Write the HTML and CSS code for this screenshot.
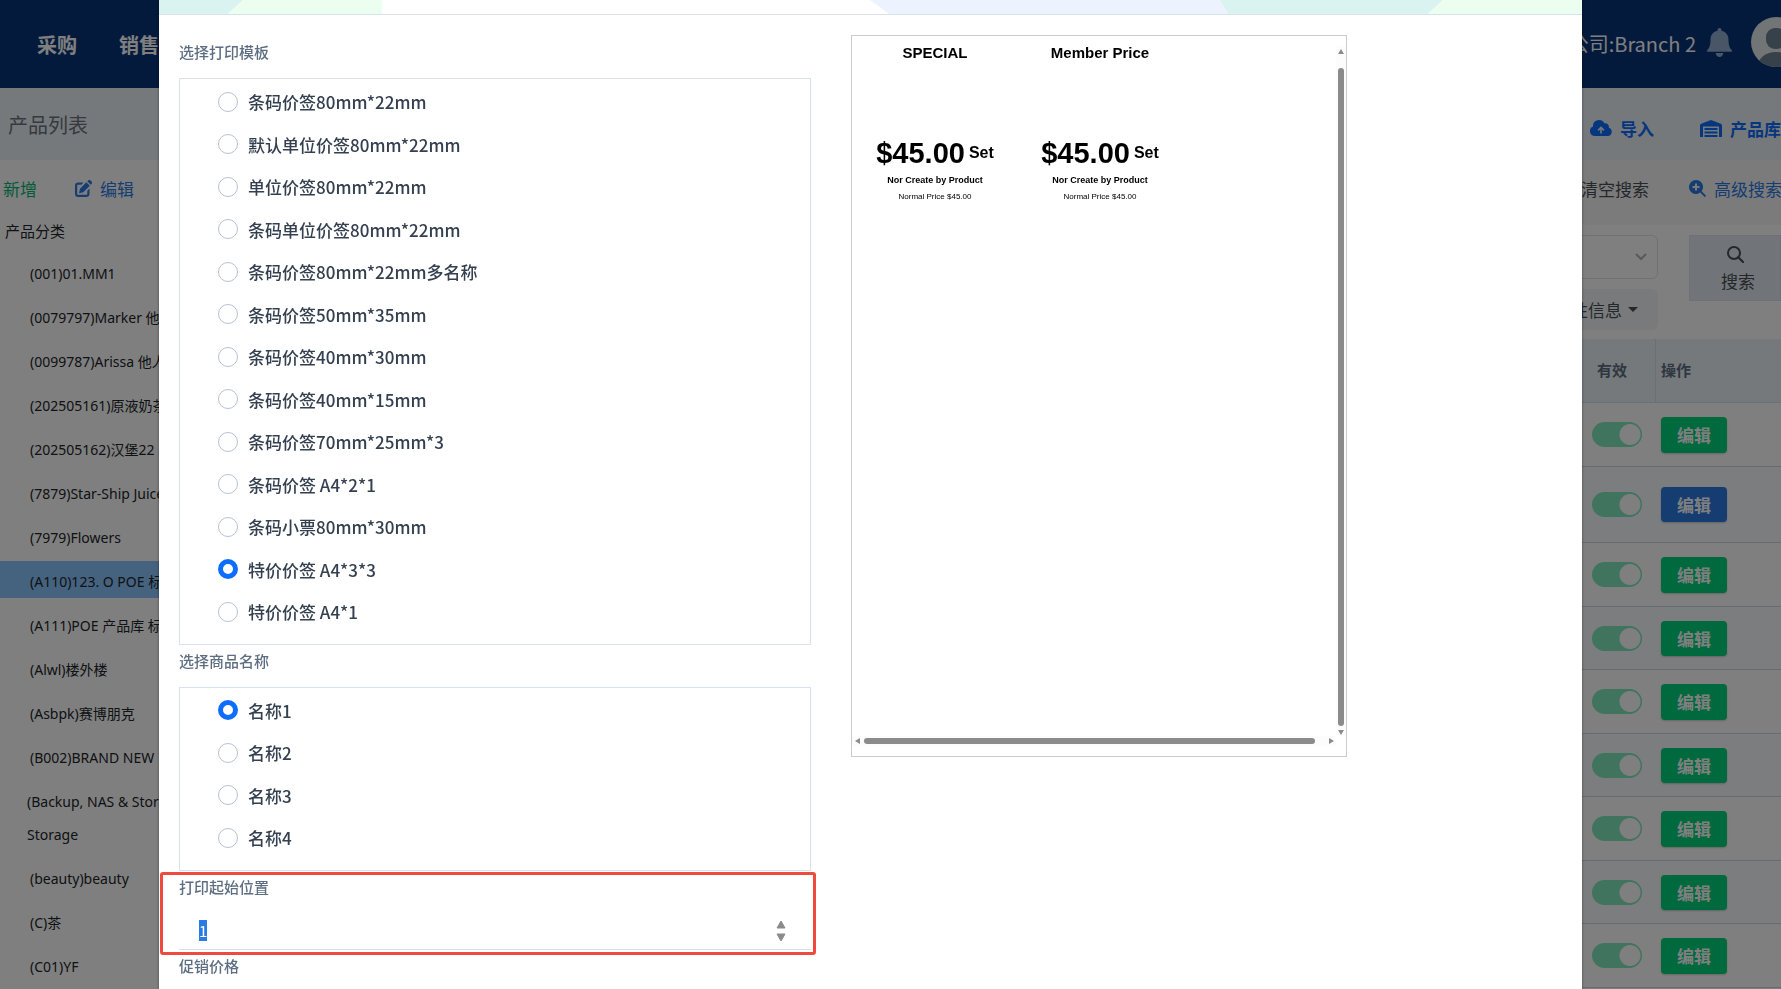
FILE: index.html
```html
<!DOCTYPE html>
<html lang="zh-CN">
<head>
    <meta charset="UTF-8">
    <meta name="viewport" content="width=device-width, initial-scale=1.0">
    <title>产品列表</title>
    <link rel="stylesheet" href="styles.css">
</head>
<body>
    <div class="page">
        <header class="topbar">
            <nav class="nav">
                <a href="#">采购</a>
                <a href="#">销售</a>
            </nav>
            <div class="user">
                <span>公司:Branch 2</span>
                <svg class="bell" viewBox="0 0 25 29"><path d="M12.500 0c1.200 0 2 .8 2 2v.8c4.200.9 7 4.300 7 8.700 0 5.500 1 8.500 3.200 10.500.6.700.3 1.800-.8 1.800H1.100c-1.100 0-1.400-1.100-.8-1.800C2.500 20 3.500 17 3.500 11.500c0-4.400 2.800-7.800 7-8.700V2c0-1.200.8-2 2-2zM8.700 25h7.600c0 2.300-1.700 4-3.800 4s-3.800-1.700-3.800-4z"/></svg>
                <svg class="avatar" viewBox="0 0 50 50">
                    <defs><clipPath id="face"><circle cx="25" cy="25" r="25"/></clipPath></defs>
                    <g clip-path="url(#face)">
                        <rect width="50" height="50" fill="#e4eaea"/>
                        <rect x="15" y="11" width="20" height="21" rx="9" fill="#6f8294"/>
                        <ellipse cx="25" cy="49" rx="18" ry="14" fill="#6f8294"/>
                    </g>
                </svg>
            </div>
        </header>

        <div class="titlebar">
            <h1>产品列表</h1>
            <div class="actions">
                <a href="#"><svg class="icon-wide" viewBox="0 0 22 17"><path fill="currentColor" fill-rule="evenodd" d="M5 16a5 5 0 0 1-2-9.600A6 6 0 0 1 14.300 3.300a3.700 3.700 0 0 1 4.500 4.500A4.200 4.200 0 0 1 17.800 16zM10.200 13.500h1.600V9.300l1.600 1.600 1.100-1.100L11 6.300 7.500 9.800l1.100 1.100 1.600-1.600z"/></svg>导入</a>
                <a href="#"><svg class="icon-wide" viewBox="0 0 22 17"><path fill="currentColor" d="M0 17V5.500C0 4.600.5 4 1.200 3.700L11 0l9.800 3.700c.7.300 1.200.9 1.200 1.800V17h-3V6.500H3V17zM4.500 8h13v2h-13zM4.500 11.500h13v2h-13zM4.500 15h13v2h-13z"/></svg>产品库</a>
            </div>
        </div>

        <div class="content">
            <aside class="sidebar">
                <div class="tools">
                    <a href="#" class="add">新增</a>
                    <a href="#" class="edit"><svg class="icon" viewBox="0 0 17 17"><path fill="currentColor" d="M11.300 2.200l3.500 3.500-6.500 6.500-4.300 1 1-4.500zM12.300 1.200l.8-.7a1.800 1.800 0 0 1 2.500 0l.9.900a1.800 1.800 0 0 1 0 2.500l-.7.800zM3 2.500h5.500L6.300 4.700H3.200c-.6 0-1 .4-1 1v8.100c0 .6.400 1 1 1h8.100c.6 0 1-.4 1-1v-3.100l2.200-2.200V14c0 1.700-1.300 3-3 3H3c-1.700 0-3-1.300-3-3V5.500c0-1.700 1.300-3 3-3z"/></svg>编辑</a>
                </div>
                <h2>产品分类</h2>
                <ul class="tree">
                    <li>(001)01.MM1</li>
                    <li>(0079797)Marker 他</li>
                    <li>(0099787)Arissa 他人</li>
                    <li>(202505161)原液奶茶</li>
                    <li>(202505162)汉堡22</li>
                    <li>(7879)Star-Ship Juice</li>
                    <li>(7979)Flowers</li>
                    <li class="active">(A110)123. O POE 标</li>
                    <li>(A111)POE 产品库 标</li>
                    <li>(Alwl)楼外楼</li>
                    <li>(Asbpk)赛博朋克</li>
                    <li>(B002)BRAND NEW</li>
                    <li class="long">(Backup, NAS &amp; Storage) Storage</li>
                    <li>(beauty)beauty</li>
                    <li>(C)茶</li>
                    <li>(C01)YF</li>
                </ul>
            </aside>

            <main class="main">
                <div class="searchbar">
                    <a href="#">清空搜索</a>
                    <a href="#" class="advanced"><svg class="icon" viewBox="0 0 17 17"><path fill="currentColor" fill-rule="evenodd" d="M7 0a7 7 0 0 1 5.600 11.200l4 4c.9.900-.5 2.300-1.400 1.400l-4-4A7 7 0 1 1 7 0zM6 3.500V6H3.500v2H6v2.500h2V8h2.500V6H8V3.500z"/></svg>高级搜索</a>
                </div>
                <div class="filters">
                    <div class="filter-fields">
                        <select aria-label="筛选"><option></option></select>
                        <button type="button" class="more">属性信息<span class="caret"></span></button>
                    </div>
                    <button type="button" class="search">
                        <svg class="icon" viewBox="0 0 17 17"><circle cx="7" cy="7" r="6" fill="none" stroke="currentColor" stroke-width="2"/><path d="M11.300 11.300l4.700 4.700" stroke="currentColor" stroke-width="2.200" stroke-linecap="round"/></svg>
                        <span>搜索</span>
                    </button>
                </div>
                <table class="products">
                    <thead>
                        <tr><th></th><th class="valid">有效</th><th class="operate">操作</th></tr>
                    </thead>
                    <tbody>
                        <tr><td></td><td><input type="checkbox" class="switch" aria-label="有效" checked></td><td><button type="button" class="btn">编辑</button></td></tr>
                        <tr class="tall"><td></td><td><input type="checkbox" class="switch" aria-label="有效" checked></td><td><button type="button" class="btn btn-blue">编辑</button></td></tr>
                        <tr><td></td><td><input type="checkbox" class="switch" aria-label="有效" checked></td><td><button type="button" class="btn">编辑</button></td></tr>
                        <tr><td></td><td><input type="checkbox" class="switch" aria-label="有效" checked></td><td><button type="button" class="btn">编辑</button></td></tr>
                        <tr><td></td><td><input type="checkbox" class="switch" aria-label="有效" checked></td><td><button type="button" class="btn">编辑</button></td></tr>
                        <tr><td></td><td><input type="checkbox" class="switch" aria-label="有效" checked></td><td><button type="button" class="btn">编辑</button></td></tr>
                        <tr><td></td><td><input type="checkbox" class="switch" aria-label="有效" checked></td><td><button type="button" class="btn">编辑</button></td></tr>
                        <tr><td></td><td><input type="checkbox" class="switch" aria-label="有效" checked></td><td><button type="button" class="btn">编辑</button></td></tr>
                        <tr><td></td><td><input type="checkbox" class="switch" aria-label="有效" checked></td><td><button type="button" class="btn">编辑</button></td></tr>
                    </tbody>
                </table>
            </main>
        </div>
    </div>

    <div class="backdrop">
        <div class="modal" role="dialog" aria-label="打印">
            <div class="modal-header">
                <svg viewBox="0 0 1423 14" preserveAspectRatio="none">
                    <path fill="#dbf3f0" d="M0 0h84L69 14H0z"/>
                    <path fill="#ebfef0" d="M84 0h139v14H69z"/>
                    <path fill="#ecf2fe" d="M711 0h350l8 14H730z"/>
                    <path fill="#dbf3f0" d="M1061 0h223l-15 14h-200z"/>
                    <path fill="#ebfef0" d="M1284 0h139v14h-154z"/>
                </svg>
            </div>
            <div class="modal-body">
                <form class="print-form" action="#">
                    <div class="field-title">选择打印模板</div>
                    <div class="options">
                        <label><input type="radio" name="template">条码价签80mm*22mm</label>
                        <label><input type="radio" name="template">默认单位价签80mm*22mm</label>
                        <label><input type="radio" name="template">单位价签80mm*22mm</label>
                        <label><input type="radio" name="template">条码单位价签80mm*22mm</label>
                        <label><input type="radio" name="template">条码价签80mm*22mm多名称</label>
                        <label><input type="radio" name="template">条码价签50mm*35mm</label>
                        <label><input type="radio" name="template">条码价签40mm*30mm</label>
                        <label><input type="radio" name="template">条码价签40mm*15mm</label>
                        <label><input type="radio" name="template">条码价签70mm*25mm*3</label>
                        <label><input type="radio" name="template">条码价签 A4*2*1</label>
                        <label><input type="radio" name="template">条码小票80mm*30mm</label>
                        <label><input type="radio" name="template" checked>特价价签 A4*3*3</label>
                        <label><input type="radio" name="template">特价价签 A4*1</label>
                    </div>

                    <div class="field-title">选择商品名称</div>
                    <div class="options">
                        <label><input type="radio" name="goods" checked>名称1</label>
                        <label><input type="radio" name="goods">名称2</label>
                        <label><input type="radio" name="goods">名称3</label>
                        <label><input type="radio" name="goods">名称4</label>
                    </div>

                    <div class="start-field">
                        <label class="field-title" for="start">打印起始位置</label>
                        <div class="number">
                            <input type="number" id="start" value="1" min="1">
                            <svg class="spinner" viewBox="0 0 14 22"><path d="M7 1l4 7H3zM7 21l4-7H3z" fill="#8b8b8b" stroke="#8b8b8b" stroke-linejoin="round"/></svg>
                        </div>
                        <div class="highlight"></div>
                    </div>

                    <div class="field-title">促销价格</div>
                </form>

                <div class="preview">
                    <div class="sheet">
                        <div class="tag">
                            <div class="tag-title">SPECIAL</div>
                            <div class="tag-price">$45.00 <span>Set</span></div>
                            <div class="tag-name">Nor Create by Product</div>
                            <div class="tag-normal">Normal Price $45.00</div>
                        </div>
                        <div class="tag">
                            <div class="tag-title">Member Price</div>
                            <div class="tag-price">$45.00 <span>Set</span></div>
                            <div class="tag-name">Nor Create by Product</div>
                            <div class="tag-normal">Normal Price $45.00</div>
                        </div>
                    </div>
                    <div class="scroll-y">
                        <svg viewBox="0 0 6 5"><path d="M3 0l3 5H0z"/></svg>
                        <div class="thumb"></div>
                        <svg viewBox="0 0 6 5"><path d="M3 5l3-5H0z"/></svg>
                    </div>
                    <div class="scroll-x">
                        <svg viewBox="0 0 5 6"><path d="M0 3l5-3v6z"/></svg>
                        <div class="thumb"></div>
                        <svg viewBox="0 0 5 6"><path d="M5 3L0 0v6z"/></svg>
                    </div>
                </div>
            </div>
        </div>
    </div>

    <script>
        // 打开弹窗时选中起始位置
        document.getElementById("start").focus({ preventScroll: true });
        document.getElementById("start").select();
    </script>
</body>
</html>
```
FILE: styles.css
```css
* {
    box-sizing: border-box;
}
html, body {
    height: 100%;
    overflow: hidden;
}
body {
    margin: 0;
    font-family: "Noto Sans CJK SC", "Noto Sans", sans-serif;
    font-size: 17px;
    line-height: 1.5;
    color: #212529;
    background-color: #fff;
}
a {
    color: inherit;
    text-decoration: none;
}
button, input, select {
    font: inherit;
    color: inherit;
    margin: 0;
}
h1, h2, ul {
    margin: 0;
    padding: 0;
    font-weight: 400;
}

/* page */
.page {
    margin-right: -20px;
}
.topbar {
    display: flex;
    justify-content: space-between;
    height: 88px;
    background-color: #063478;
    color: #fff;
    font-size: 20px;
}
.nav {
    display: flex;
    align-items: center;
    gap: 42px;
    padding: 2px 0 0 37px;
    font-weight: 700;
}
.user {
    display: flex;
    align-items: center;
    padding-bottom: 4px;
}
.user span {
    padding-top: 4px;
}
.bell {
    width: 25px;
    height: 29px;
    margin: 0 19px 0 11px;
    fill: #90acd0;
}
.avatar {
    width: 50px;
    height: 50px;
}
.titlebar {
    display: flex;
    justify-content: space-between;
    align-items: center;
    height: 72px;
    padding: 2px 20px 0 8px;
    background-color: #eaf2f8;
}
.titlebar h1 {
    font-size: 20px;
    color: #6c757d;
}
.actions {
    display: flex;
    gap: 46px;
    padding-top: 7px;
    font-weight: 700;
    color: #0d6efd;
}
.actions a, .tools a, .searchbar a {
    display: flex;
    align-items: center;
    gap: 8px;
}
.icon {
    width: 17px;
    height: 17px;
}
.icon-wide {
    width: 22px;
    height: 17px;
}
.content {
    display: flex;
}
.sidebar {
    flex: 0 0 230px;
    white-space: nowrap;
}
.tools {
    display: flex;
    gap: 38px;
    align-items: center;
    height: 57px;
    padding-left: 3px;
}
.add {
    color: #05b871;
}
.edit, .advanced {
    color: #2c7be5;
}
.sidebar h2 {
    padding-left: 5px;
    font-size: 15px;
    line-height: 28px;
}
.tree {
    padding-top: 8px;
    list-style: none;
    font-family: "Noto Sans", "Noto Sans CJK SC", sans-serif;
    font-size: 14px;
    line-height: 33px;
}
.tree li {
    margin-bottom: 7px;
    padding: 4px 0 0 30px;
}
.tree .active {
    background-color: #8ac4ff;
}
.tree .long {
    padding-left: 27px;
    white-space: normal;
}
.main {
    flex: 1;
    min-width: 0;
}
.searchbar {
    display: flex;
    justify-content: flex-end;
    gap: 40px;
    height: 65px;
    padding: 0 19px 8px 0;
    background-color: #f6f6f6;
    color: #495057;
}
.searchbar .advanced {
    color: #2c7be5;
}
.filters {
    display: flex;
    justify-content: flex-end;
    gap: 31px;
    height: 114px;
    padding: 10px 20px 0 0;
}
.filter-fields {
    display: flex;
    flex-direction: column;
    align-items: flex-end;
    gap: 10px;
}
.filter-fields select {
    width: 260px;
    height: 44px;
    border: 1px solid #dee2e6;
    border-radius: 6px;
    appearance: none;
    background: url("data:image/svg+xml,%3Csvg xmlns='http://www.w3.org/2000/svg' viewBox='0 0 12 8'%3E%3Cpath d='M1 1l5 5 5-5' fill='none' stroke='%23adb5bd' stroke-width='2'/%3E%3C/svg%3E") right 10px center / 12px 8px no-repeat #fff;
}
.more {
    display: flex;
    align-items: center;
    gap: 6px;
    height: 41px;
    padding: 0 20px;
    border: 0;
    border-radius: 6px;
    background-color: #f3f5f8;
    color: #495057;
}
.caret {
    border: 5px solid transparent;
    border-top-color: #495057;
    border-bottom: 0;
}
.search {
    display: flex;
    flex-direction: column;
    align-items: center;
    justify-content: center;
    gap: 5px;
    width: 92px;
    height: 66px;
    padding: 4px 0 0;
    border: 1px solid #d5e3f0;
    background-color: #e3ebf2;
    color: #495057;
}
.search span {
    padding-left: 6px;
}
.products {
    width: 100%;
    table-layout: fixed;
    border-collapse: separate;
    border-spacing: 0;
}
.products th {
    height: 64px;
    padding: 0 5px;
    border-bottom: 1px solid #d5e0ef;
    background-color: #eaf2f8;
    color: #5e6e82;
    font-size: 15px;
    font-weight: 700;
    text-align: left;
}
.products .valid {
    width: 72px;
    padding-left: 13px;
    border-right: 1px solid #d8dee5;
}
.products .operate {
    width: 145px;
}
.products td {
    padding: 14px 0 13px 5px;
    border-bottom: 1px solid #cdd9e8;
    line-height: 0;
}
.products td:nth-child(2) {
    padding-left: 8px;
}
.products tr:nth-child(even) td {
    background-color: #f8fafd;
}
.products .tall td {
    padding-top: 20px;
    padding-bottom: 20px;
}
.switch {
    display: block;
    width: 50px;
    height: 25px;
    border-radius: 13px;
    appearance: none;
    background: radial-gradient(circle at 38px 50%, #fff 10px, transparent 11px) #80e8bc;
}
.btn {
    padding: 5px 16px;
    border: 0;
    border-radius: 4px;
    background-color: #00d27a;
    color: #fff;
    font-weight: 700;
    line-height: 1.5;
    box-shadow: 0 1px 2px rgba(0, 0, 0, 0.2);
}
.btn-blue {
    background-color: #2c7be5;
}

/* print dialog */
.backdrop {
    position: fixed;
    inset: 0;
    padding: 0 199px 0 159px;
    background-color: rgba(0, 0, 0, 0.5);
    overflow: hidden;
}
.modal {
    min-height: 100%;
    background-color: #fff;
    box-shadow: 0 0 3px rgba(0, 0, 0, 0.4);
}
.modal-header {
    border-bottom: 1px solid #d8e2ef;
}
.modal-header svg {
    display: block;
    width: 100%;
    height: 14px;
}
.modal-body {
    display: flex;
    align-items: flex-start;
    gap: 40px;
    padding: 20px;
}
.print-form {
    flex: 0 0 calc(50% - 60px);
    padding-top: 1px;
}
.field-title {
    display: block;
    margin-bottom: 10px;
    font-size: 15px;
    font-weight: 500;
    line-height: 32px;
    color: #5e6e82;
}
.options {
    padding: 10px 0 2px 38px;
    border: 1px solid #d8e2ef;
    font-weight: 500;
    color: #344050;
}
.options label {
    display: flex;
    align-items: center;
    gap: 10px;
    margin-bottom: 17px;
}
.options input {
    width: 20px;
    height: 20px;
    border: 1px solid #b6c1d2;
    border-radius: 50%;
    appearance: none;
    background-color: #fff;
}
.options input:checked {
    border: 5px solid #0d6efd;
}
.start-field {
    position: relative;
}
.number {
    display: flex;
    align-items: center;
    padding: 0 23px 0 20px;
    border-bottom: 1px solid #d8e2ef;
}
.number input {
    flex: 1;
    height: 36px;
    padding: 0;
    border: 0;
    outline: 0;
    appearance: textfield;
    font-size: 15px;
    color: #344050;
}
.number input::selection {
    background-color: #2c7be5;
    color: #fff;
}
.number input::-webkit-inner-spin-button {
    display: none;
}
.spinner {
    width: 14px;
    height: 22px;
}
.highlight {
    position: absolute;
    inset: 1px -5px -5px -19px;
    border: 3px solid #f04a3e;
    border-radius: 3px;
    pointer-events: none;
}
.preview {
    display: grid;
    grid-template: 1fr 10px / 1fr 10px;
    flex: 0 1 496px;
    height: 722px;
    padding-bottom: 10px;
    border: 1px solid #ccc;
    font-family: "Liberation Sans", Arial, sans-serif;
    color: #000;
}
.sheet {
    display: flex;
    padding-left: 1px;
    overflow: hidden;
}
.tag {
    flex: 0 0 165px;
    text-align: center;
    white-space: nowrap;
}
.tag-title {
    height: 98px;
    padding-top: 6px;
    font-size: 15px;
    font-weight: 700;
}
.tag-price {
    display: flex;
    align-items: center;
    justify-content: center;
    gap: 4px;
    font-size: 29px;
    font-weight: 700;
    line-height: 38px;
}
.tag-price span {
    font-size: 16px;
}
.tag-name {
    font-size: 9px;
    font-weight: 700;
    line-height: 17px;
}
.tag-normal {
    font-size: 8px;
    line-height: 16px;
}
.scroll-y, .scroll-x {
    display: flex;
    align-items: center;
    background-color: #fcfcfc;
    fill: #8b8b8b;
}
.scroll-y {
    flex-direction: column;
    margin-top: 10px;
    padding: 3px 0 1px;
}
.scroll-x {
    padding: 0 2px 0 3px;
}
.scroll-y svg {
    width: 6px;
    height: 5px;
}
.scroll-x svg {
    width: 5px;
    height: 6px;
}
.thumb {
    flex: 1;
    border-radius: 3px;
    background-color: #8b8b8b;
}
.scroll-y .thumb {
    width: 6px;
    margin: 14px 0 4px;
}
.scroll-x .thumb {
    height: 6px;
    margin: 0 14px 0 4px;
}
```
